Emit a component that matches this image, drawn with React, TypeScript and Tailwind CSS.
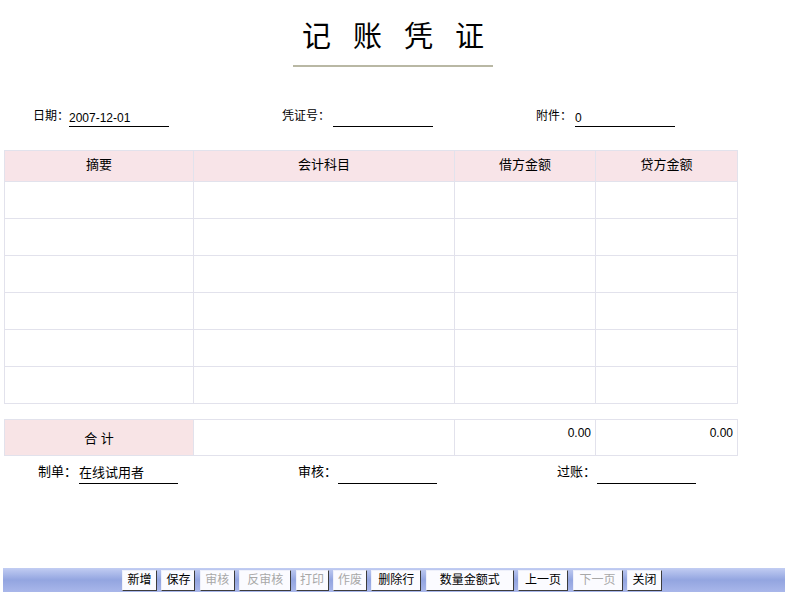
import React from 'react';

const cjk = { fontFamily: '"Liberation Sans", "Noto Sans CJK SC", sans-serif' };

const buttons: { label: string; w: string; disabled?: boolean }[] = [
  { label: '新增', w: 'w-[35px]' },
  { label: '保存', w: 'w-[34px]' },
  { label: '审核', w: 'w-[35px]', disabled: true },
  { label: '反审核', w: 'w-[52px]', disabled: true },
  { label: '打印', w: 'w-[33px]', disabled: true },
  { label: '作废', w: 'w-[34px]', disabled: true },
  { label: '删除行', w: 'w-[50px]' },
  { label: '数量金额式', w: 'w-[88px]' },
  { label: '上一页', w: 'w-[50px]' },
  { label: '下一页', w: 'w-[50px]', disabled: true },
  { label: '关闭', w: 'w-[35px]' },
];

function Field({ label, value, labelW, lineW = 'w-[100px]' }: { label: string; value?: string; labelW: string; lineW?: string }) {
  return (
    <div className="flex items-end">
      <span className={`${labelW} pb-[4px] text-[12px] leading-[14px]`}>{label}</span>
      <span className={`${lineW} border-b border-black pb-[1px] text-[12px] leading-[14px]`}>{value ?? '\u00a0'}</span>
    </div>
  );
}

export default function App() {
  const rows = [0, 1, 2, 3, 4, 5];
  return (
    <div className="relative h-[596px] w-[785px] overflow-hidden bg-white text-black" style={cjk}>
      {/* title */}
      <div className="flex flex-col items-center pt-[19px]">
        <div className="flex gap-[23px] text-[29px] leading-[36px]">
          {['记', '账', '凭', '证'].map((c) => (
            <span key={c} className="w-[28px] text-center">{c}</span>
          ))}
        </div>
        <div className="mt-[10px] h-[2px] w-[200px] bg-[#b9b8a4]" />
      </div>

      {/* voucher info */}
      <div className="mt-[42px] flex pl-[33px]">
        <div className="w-[249px]">
          <Field label="日期：" labelW="w-[36px]" value="2007-12-01" />
        </div>
        <div className="w-[254px]">
          <Field label="凭证号：" labelW="w-[51px]" />
        </div>
        <div>
          <Field label="附件：" labelW="w-[39px]" value="0" />
        </div>
      </div>

      {/* entries */}
      <table className="ml-[4px] mt-[23px] w-[733px] table-fixed border-collapse text-[13px]">
        <colgroup>
          <col className="w-[189px]" />
          <col className="w-[261px]" />
          <col className="w-[141px]" />
          <col className="w-[142px]" />
        </colgroup>
        <thead>
          <tr className="h-[31px] bg-[#f8e4e8]">
            {['摘要', '会计科目', '借方金额', '贷方金额'].map((h) => (
              <th key={h} className="border border-[#e2e2ec] pb-[2px] text-center font-normal">{h}</th>
            ))}
          </tr>
        </thead>
        <tbody>
          {rows.map((r) => (
            <tr key={r} className="h-[37px]">
              <td className="border border-[#e2e2ec]" />
              <td className="border border-[#e2e2ec]" />
              <td className="border border-[#e2e2ec]" />
              <td className="border border-[#e2e2ec]" />
            </tr>
          ))}
        </tbody>
      </table>

      {/* totals */}
      <table className="ml-[4px] mt-[15px] w-[733px] table-fixed border-collapse text-[13px]">
        <colgroup>
          <col className="w-[189px]" />
          <col className="w-[261px]" />
          <col className="w-[141px]" />
          <col className="w-[142px]" />
        </colgroup>
        <tbody>
          <tr className="h-[36px]">
            <td className="border border-[#e2e2ec] bg-[#f8e4e6] pt-[2px] text-center">合 计</td>
            <td className="border border-[#e2e2ec]" />
            <td className="border border-[#e2e2ec] pr-[4px] pt-[4px] text-right align-top text-[12px]">0.00</td>
            <td className="border border-[#e2e2ec] pr-[4px] pt-[4px] text-right align-top text-[12px]">0.00</td>
          </tr>
        </tbody>
      </table>

      {/* signatures */}
      <div className="mt-[8px] flex pl-[38px] text-[13px]">
        <div className="flex w-[260px] items-end">
          <span className="w-[41px] pb-[4px] leading-[16px]">制单：</span>
          <span className="w-[99px] border-b border-black pb-[2px] leading-[16px]">在线试用者</span>
        </div>
        <div className="flex w-[259px] items-end">
          <span className="w-[40px] pb-[4px] leading-[16px]">审核：</span>
          <span className="w-[99px] border-b border-black pb-[2px] leading-[16px]">&nbsp;</span>
        </div>
        <div className="flex items-end">
          <span className="w-[40px] pb-[4px] leading-[16px]">过账：</span>
          <span className="w-[99px] border-b border-black pb-[2px] leading-[16px]">&nbsp;</span>
        </div>
      </div>

      {/* toolbar */}
      <div className="absolute bottom-[4px] left-[3px] right-0 flex h-[24px] items-center bg-gradient-to-b from-[#c2cdf2] via-[#93a5e0] to-[#a9b7ea] pl-[119px]">
        <div className="flex gap-[4.4px]">
          {buttons.map((b) => (
            <button
              key={b.label}
              type="button"
              className={`${b.w} h-[21px] border border-t-[#eef0fa] border-l-[#eef0fa] border-r-[#3c3c3c] border-b-[#3c3c3c] bg-[#fbfbff] text-center text-[12px] leading-[19px] ${b.disabled ? 'text-[#a8a8a8]' : 'text-black'}`}
            >
              {b.label}
            </button>
          ))}
        </div>
      </div>
    </div>
  );
}
